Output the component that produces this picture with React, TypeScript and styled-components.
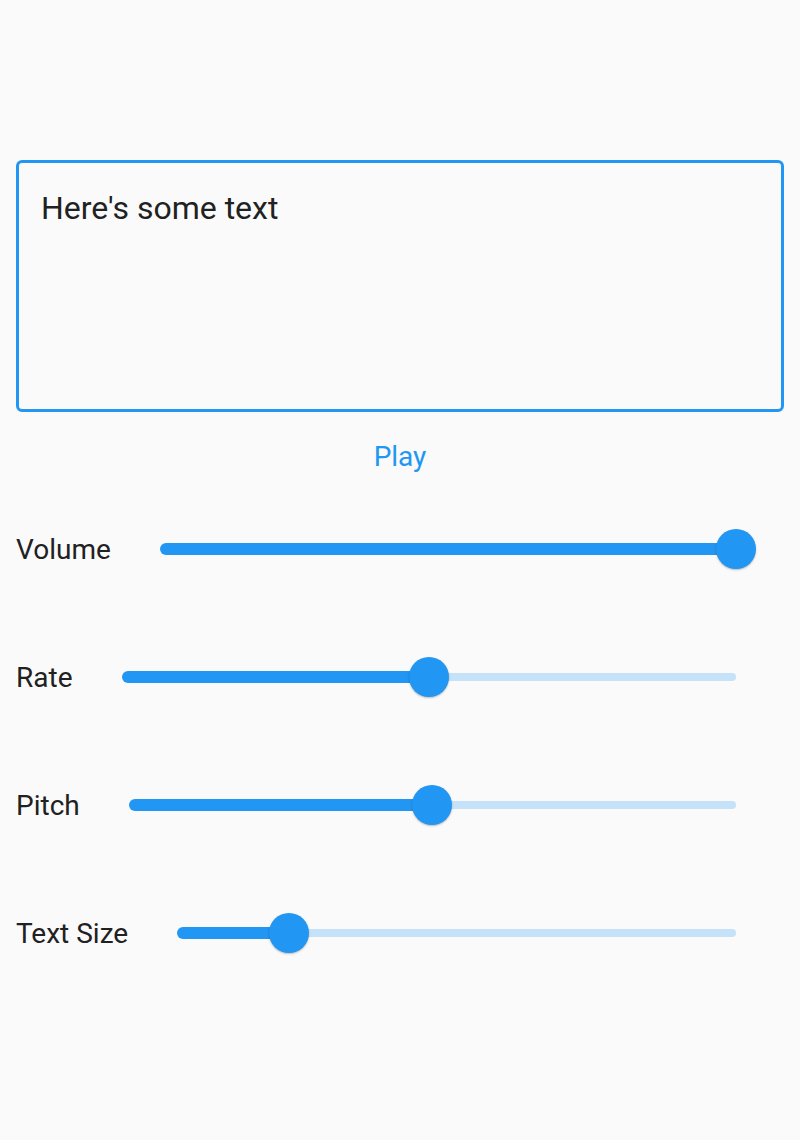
import React from "react";
import styled, { createGlobalStyle } from "styled-components";

const Global = createGlobalStyle`
  html, body { margin: 0; padding: 0; background: #fafafa; }
  body { font-family: Roboto, "Noto Sans", sans-serif; color: rgba(0,0,0,0.87); }
`;

const Page = styled.div`
  width: 800px;
  min-height: 1140px;
  box-sizing: border-box;
  padding-top: 160px;
  display: flex;
  flex-direction: column;
`;

const TextBox = styled.div`
  margin: 0 16px;
  height: 252px;
  box-sizing: border-box;
  border: 3px solid #2196f3;
  border-radius: 6px;
  padding: 26px 22px;
  font-size: 32px;
  line-height: 38px;
  color: #212121;
`;

const PlayWrap = styled.div`
  height: 88px;
  display: flex;
  align-items: center;
  justify-content: center;
  margin-bottom: 25px;
`;

const PlayButton = styled.button`
  border: none;
  background: transparent;
  color: #2196f3;
  font-family: Roboto, "Noto Sans", sans-serif;
  font-size: 28px;
  padding: 8px 16px;
  cursor: pointer;
`;

const Sliders = styled.div`
  display: flex;
  flex-direction: column;
  gap: 80px;
`;

const Row = styled.div`
  height: 48px;
  display: flex;
  align-items: center;
  padding: 0 64px 0 16px;
`;

const Label = styled.span`
  font-size: 28px;
  color: #212121;
  margin-right: 49px;
  white-space: nowrap;
`;

const Track = styled.div`
  position: relative;
  flex: 1;
  height: 48px;
  display: flex;
  align-items: center;
`;

const Active = styled.div`
  height: 12px;
  background: #2196f3;
  border-radius: 6px 0 0 6px;
`;

const Inactive = styled.div`
  flex: 1;
  height: 8px;
  background: #c6e2f8;
  border-radius: 0 4px 4px 0;
`;

const Thumb = styled.div`
  position: absolute;
  top: 4px;
  width: 40px;
  height: 40px;
  margin-left: -20px;
  border-radius: 50%;
  background: #2196f3;
  box-shadow: 0 1px 2px rgba(0, 0, 0, 0.25);
`;

const SliderRow: React.FC<{ label: string; value: number }> = ({ label, value }) => (
  <Row>
    <Label>{label}</Label>
    <Track>
      <Active style={{ width: `${value * 100}%` }} />
      <Inactive />
      <Thumb style={{ left: `${value * 100}%` }} />
    </Track>
  </Row>
);

export default function App() {
  return (
    <>
      <Global />
      <Page>
        <TextBox>Here's some text</TextBox>
        <PlayWrap>
          <PlayButton>Play</PlayButton>
        </PlayWrap>
        <Sliders>
          <SliderRow label="Volume" value={1} />
          <SliderRow label="Rate" value={0.5} />
          <SliderRow label="Pitch" value={0.5} />
          <SliderRow label="Text Size" value={0.2} />
        </Sliders>
      </Page>
    </>
  );
}
